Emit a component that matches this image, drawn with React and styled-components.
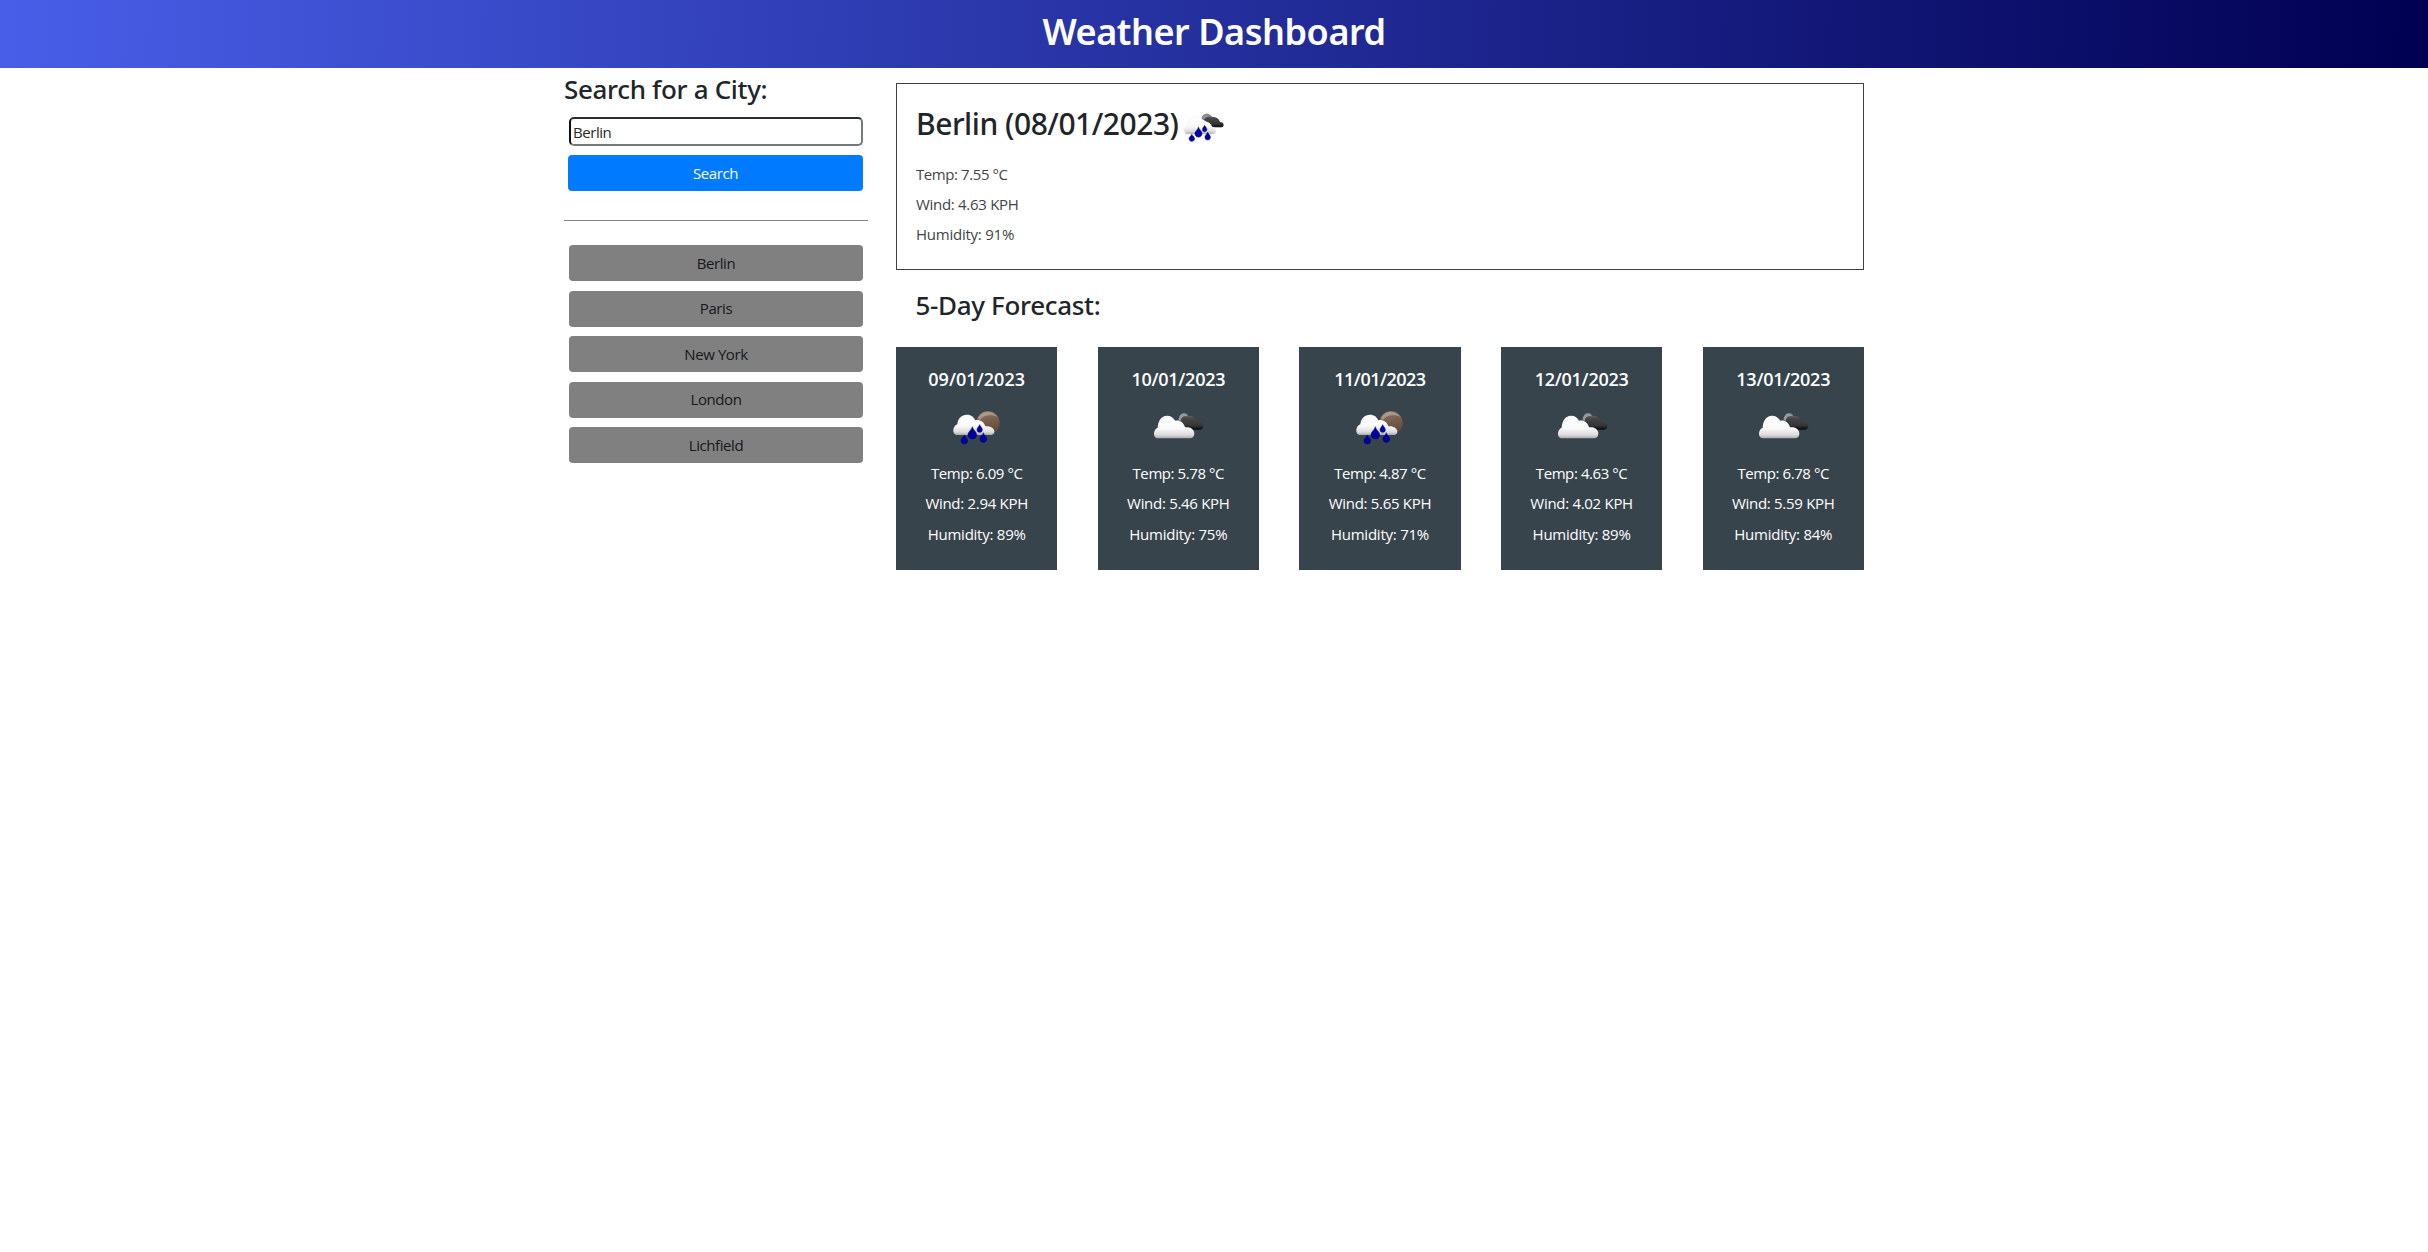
import React, { useState } from "react";
import styled, { createGlobalStyle } from "styled-components";

const GlobalStyle = createGlobalStyle`
  *, *::before, *::after { box-sizing: border-box; }
  body {
    margin: 0;
    background: #fff;
    color: #212529;
    font-family: "Open Sans", "Noto Sans", sans-serif;
    font-size: 15px;
  }
  h1, h2, h3, h4, p { margin: 0; }
`;

const Header = styled.header`
  height: 68px;
  background: linear-gradient(91deg, #485ee8 0%, #000052 100%);
  text-align: center;
`;

const Title = styled.h1`
  color: #fff;
  font: 600 36px/64px "Noto Sans", sans-serif;
  letter-spacing: -0.45px;
`;

const Main = styled.main`
  display: flex;
  gap: 28px;
  width: 1300px;
  margin: 0 auto;
`;

const Sidebar = styled.aside`
  width: 304px;
  padding-top: 4px;
`;

const SectionTitle = styled.h2`
  font: 500 26px/34px "Noto Sans", sans-serif;
  letter-spacing: -0.33px;
`;

const SearchForm = styled.form`
  display: flex;
  flex-direction: column;
  gap: 9px;
  padding: 11px 5px 0 4px;
`;

const SearchInput = styled.input`
  height: 29px;
  margin-left: 1px;
  padding: 0 2px;
  border: 2px solid #76797c;
  border-top-color: #2b2d2f;
  border-left-color: #101010;
  border-radius: 5px;
  outline: none;
  color: #262b26;
  font: inherit;
  letter-spacing: -0.45px;
`;

const Button = styled.button`
  height: 36px;
  padding: 0 0 1px;
  border: 0;
  border-radius: 4px;
  background: ${(p) => (p.$primary ? "#007bff" : "#808080")};
  color: ${(p) => (p.$primary ? "#fff" : "#16191c")};
  font: inherit;
  line-height: 34px;
  letter-spacing: -0.42px;
`;

const Divider = styled.hr`
  height: 1px;
  margin: 29px 0 24px;
  border: 0;
  background: #808080;
`;

const History = styled.div`
  display: flex;
  flex-direction: column;
  gap: 9.6px;
  padding: 0 5px;
`;

const Content = styled.section`
  flex: 1;
  padding-top: 15px;
`;

const Today = styled.article`
  height: 187px;
  padding: 18px 20px 18px 19px;
  border: 1px solid #3f4245;
`;

const TodayHeading = styled.div`
  display: flex;
  align-items: center;
  height: 44px;
`;

const City = styled.h3`
  width: 263px;
  white-space: nowrap;
  font: 500 30px/44px "Noto Sans", sans-serif;
  letter-spacing: -0.47px;
`;

const TodayIcon = styled.svg`
  width: 50px;
  height: 50px;
  margin-top: 6px;
`;

const TodayDetails = styled.div`
  padding-top: 12.5px;
  color: #3f4448;
`;

const Metric = styled.p`
  line-height: 30.4px;
  white-space: nowrap;
  letter-spacing: ${(p) => p.$tracking}px;
`;

const ForecastTitle = styled(SectionTitle)`
  padding: 18px 0 0 19.5px;
`;

const Forecast = styled.div`
  display: flex;
  justify-content: space-between;
  padding-top: 25px;
`;

const DayCard = styled.article`
  display: flex;
  flex-direction: column;
  align-items: center;
  width: 161.4px;
  height: 222.5px;
  padding-top: 20px;
  background: #38444c;
  color: #fff;
`;

const DayDate = styled.h4`
  font: 600 18px/24px "Open Sans", sans-serif;
  letter-spacing: ${(p) => p.$tracking}px;
`;

const DayIcon = styled.svg`
  width: 80px;
  height: 60px;
  margin-top: 9px;
`;

const DayDetails = styled.div`
  margin-top: -2px;
  text-align: center;
`;

const cities = ["Berlin", "Paris", "New York", "London", "Lichfield"];

const days = [
  { date: "09/01/2023", icon: "rain", temp: "6.09", wind: "2.94", humidity: 89, tracking: 0.05 },
  { date: "10/01/2023", icon: "clouds", temp: "5.78", wind: "5.46", humidity: 75, tracking: -0.25 },
  { date: "11/01/2023", icon: "rain", temp: "4.87", wind: "5.65", humidity: 71, tracking: -0.5 },
  { date: "12/01/2023", icon: "clouds", temp: "4.63", wind: "4.02", humidity: 89, tracking: -0.25 },
  { date: "13/01/2023", icon: "clouds", temp: "6.78", wind: "5.59", humidity: 84, tracking: -0.25 },
];

function Gradients() {
  return (
    <defs>
      <linearGradient id="cloud" x1="0" y1="0" x2="0" y2="1">
        <stop offset="0" stopColor="#fff" />
        <stop offset="0.55" stopColor="#fafafa" />
        <stop offset="0.85" stopColor="#dcdcdc" />
        <stop offset="1" stopColor="#aaa" />
      </linearGradient>
      <linearGradient id="dark" x1="0" y1="0" x2="0" y2="1">
        <stop offset="0" stopColor="#77787a" />
        <stop offset="0.35" stopColor="#454545" />
        <stop offset="0.75" stopColor="#353535" />
        <stop offset="1" stopColor="#080808" />
      </linearGradient>
      <linearGradient id="moon" x1="0" y1="0" x2="0.3" y2="1">
        <stop offset="0" stopColor="#b39f92" />
        <stop offset="0.35" stopColor="#806653" />
        <stop offset="1" stopColor="#624a39" />
      </linearGradient>
    </defs>
  );
}

const frontCloud =
  "M57 115C49 115 44 108 45 99C46 91 50 85 56 83C57 63 67 47 84 47C96 47 104 53 108 62C121 59 134 66 138 82C153 79 166 88 166 100C166 110 161 115 153 115Z";

const backCloud =
  "M119 62C119 48 126 38 136 39C142 39 146 43 149 48C160 46 170 53 174 66C185 65 193 71 193 79C193 86 188 89 181 89H144C140 80 134 68 119 62Z";

function Drops() {
  return (
    <g fill="#0000a0" stroke="#00006c" strokeWidth="1.5">
      <path d="M97 80C99 90 110 95 110 104C110 112 104 117 97 117C90 117 84 112 84 104C84 95 95 90 97 80Z" />
      <path d="M73 106C75 112 83 115 83 122C83 128 79 132 73 132C67 132 63 128 63 122C63 115 71 112 73 106Z" />
      <path d="M130 98C132 106 140 109 140 116C140 123 136 127 130 127C124 127 120 123 120 116C120 109 128 106 130 98Z" />
      <path d="M119 74C121 80 127 83 127 89C127 94 124 97 119 97C114 97 111 94 111 89C111 83 117 80 119 74Z" />
    </g>
  );
}

function RainMoonIcon() {
  return (
    <DayIcon viewBox="-9 0 240 180">
      <Gradients />
      <circle cx="144" cy="69" r="35" fill="url(#moon)" />
      <path d="M114 56C121 42 132 37 145 37C158 37 168 43 173 51C153 43 132 44 120 60Z" fill="#bfaea3" opacity="0.6" />
      <path
        d="M52 105C44 105 39 98 40 89C41 81 46 75 52 73C53 56 65 44 81 44C94 44 102 51 106 61C119 58 132 66 136 79C151 77 163 85 163 95C163 102 158 105 150 105Z"
        fill="url(#cloud)"
      />
      <Drops />
    </DayIcon>
  );
}

function CloudsIcon() {
  return (
    <DayIcon viewBox="-3 0 240 180">
      <Gradients />
      <path d={backCloud} fill="url(#dark)" />
      <path d="M119 61C119 48 127 39 137 41C142 42 145 45 147 49C136 45 126 51 125 63Z" fill="#969a9c" />
      <path d={frontCloud} fill="url(#cloud)" />
    </DayIcon>
  );
}

function RainCloudsIcon() {
  return (
    <TodayIcon viewBox="28 7 150 150">
      <Gradients />
      <path
        d="M96 57C97 47 106 41 115 43C121 44 125 48 128 53C139 50 148 58 151 67C158 67 162 71 162 76C162 81 158 83 153 83H127C119 72 108 64 96 57Z"
        fill="url(#dark)"
      />
      <path d="M96 56C98 46 108 42 116 45C120 46 123 49 124 52C115 49 107 52 103 61Z" fill="#8f9193" />
      <path
        d="M54 103C47 103 43 97 43 90C43 82 48 76 55 75C56 61 66 52 80 52C91 52 98 58 102 67C113 65 124 71 127 82C134 82 138 87 138 94C138 100 134 103 127 103Z"
        fill="url(#cloud)"
        stroke="#e3e3e5"
      />
      <g transform="translate(5.5 15) scale(0.835)">
        <Drops />
      </g>
    </TodayIcon>
  );
}

function Metrics({ temp, wind, humidity }) {
  return (
    <>
      <Metric $tracking={-0.42}>Temp: {temp} °C</Metric>
      <Metric $tracking={-0.3}>Wind: {wind} KPH</Metric>
      <Metric $tracking={-0.24}>Humidity: {humidity}%</Metric>
    </>
  );
}

export default function App() {
  const [query, setQuery] = useState("Berlin");

  return (
    <>
      <GlobalStyle />
      <Header>
        <Title>Weather Dashboard</Title>
      </Header>
      <Main>
        <Sidebar>
          <SectionTitle>Search for a City:</SectionTitle>
          <SearchForm onSubmit={(e) => e.preventDefault()}>
            <SearchInput value={query} onChange={(e) => setQuery(e.target.value)} />
            <Button $primary>Search</Button>
          </SearchForm>
          <Divider />
          <History>
            {cities.map((city) => (
              <Button key={city} type="button" onClick={() => setQuery(city)}>
                {city}
              </Button>
            ))}
          </History>
        </Sidebar>
        <Content>
          <Today>
            <TodayHeading>
              <City>Berlin (08/01/2023)</City>
              <RainCloudsIcon />
            </TodayHeading>
            <TodayDetails>
              <Metrics temp="7.55" wind="4.63" humidity={91} />
            </TodayDetails>
          </Today>
          <ForecastTitle>5-Day Forecast:</ForecastTitle>
          <Forecast>
            {days.map((day) => (
              <DayCard key={day.date}>
                <DayDate $tracking={day.tracking}>{day.date}</DayDate>
                {day.icon === "rain" ? <RainMoonIcon /> : <CloudsIcon />}
                <DayDetails>
                  <Metrics temp={day.temp} wind={day.wind} humidity={day.humidity} />
                </DayDetails>
              </DayCard>
            ))}
          </Forecast>
        </Content>
      </Main>
    </>
  );
}
